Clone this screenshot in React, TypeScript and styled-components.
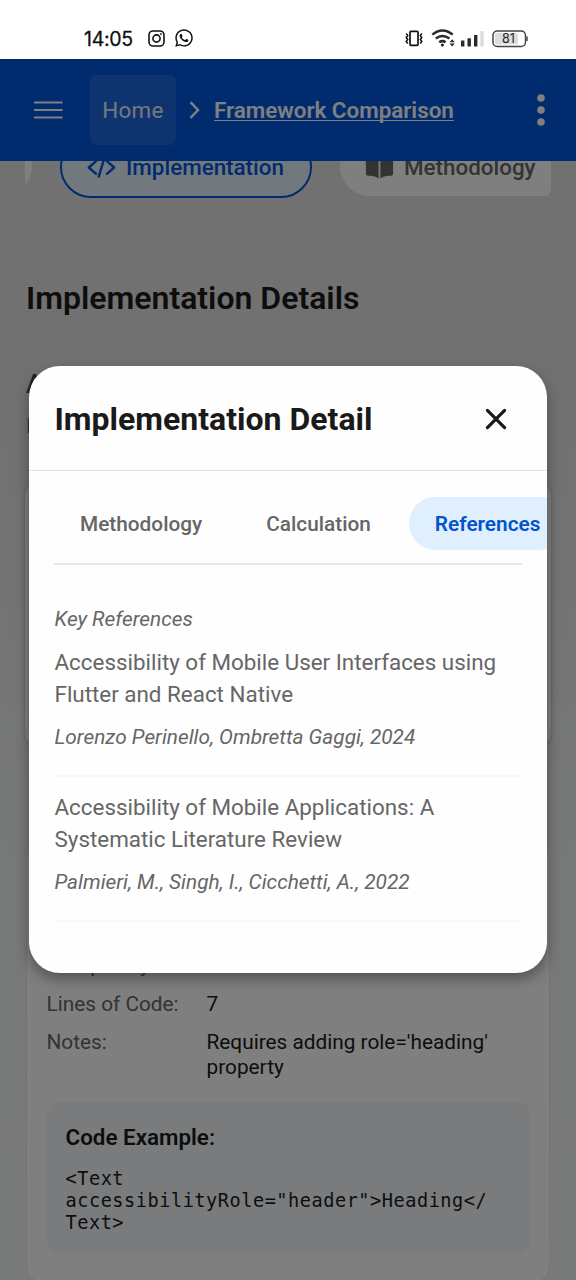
import React from 'react';
import styled, { createGlobalStyle } from 'styled-components';
import { IoBook, IoCodeSlashOutline } from 'react-icons/io5';
import { FaWhatsapp } from 'react-icons/fa';

const GlobalStyle = createGlobalStyle`
  * { box-sizing: border-box; }
  body { margin: 0; background: #fff; font-family: Roboto, "Liberation Sans", sans-serif; }
  h1, h2, h3, p, pre { margin: 0; }
  button { font: inherit; border: 0; background: none; padding: 0; }
`;

const Screen = styled.div`
  width: 576px;
  height: 1280px;
  overflow: hidden;
  display: flex;
  flex-direction: column;
`;

const StatusBar = styled.header`
  height: 59px;
  flex: none;
  padding: 17px 48px 0 84px;
  display: flex;
  justify-content: space-between;
  background: #fff;
  color: #111;
`;

const StatusGroup = styled.div`
  display: flex;
  align-items: center;
  height: 42px;
`;

const Clock = styled.span`
  width: 64px;
  padding-top: 2px;
  font: 400 19.5px/24px Inter, sans-serif;
  letter-spacing: -0.3px;
  -webkit-text-stroke: 0.3px #111;
  white-space: nowrap;
`;

const WhatsappIcon = styled(FaWhatsapp)`
  margin-left: 9px;
`;

const AppFrame = styled.div`
  position: relative;
  flex: 1;
  display: flex;
  flex-direction: column;
  min-height: 0;
  background: linear-gradient(#e2e2e2 0, #e2e2e2 300px, #e8e8e8 560px, #eef2f1 800px, #f1f4f2 100%);
`;

const AppBar = styled.nav`
  height: 102px;
  flex: none;
  display: flex;
  align-items: center;
  padding: 0 31px 0 34px;
  background: #0057dc;
  color: #fff;
`;

const HomeCrumb = styled.span`
  width: 86px;
  height: 70px;
  margin: 0 13px 0 27px;
  border-radius: 6px;
  background: rgba(255, 255, 255, 0.1);
  color: rgba(255, 255, 255, 0.93);
  display: flex;
  align-items: center;
  justify-content: center;
  font-size: 22.4px;
  letter-spacing: 0.3px;
`;

const CurrentCrumb = styled.span`
  flex: 1;
  margin-left: 14px;
  font-size: 22.4px;
  font-weight: 600;
  text-decoration: underline;
  text-decoration-thickness: 1px;
  text-decoration-skip-ink: none;
  text-underline-offset: 2px;
  white-space: nowrap;
`;

const Content = styled.main`
  flex: 1;
  min-height: 0;
  overflow: hidden;
  padding: 0 25px;
`;

const ChipStrip = styled.div`
  height: 62px;
  margin-top: -25px;
  display: flex;
  gap: 28px;
  overflow: hidden;
  border-radius: 10px;
`;

const Chip = styled.div<{ $active?: boolean; $width: number }>`
  flex: none;
  width: ${(p) => p.$width}px;
  height: ${(p) => (p.$active ? 62 : 60)}px;
  border-radius: 31px;
  border: ${(p) => (p.$active ? '2px solid #0057dc' : '0')};
  background: ${(p) => (p.$active ? '#e3f2fd' : '#fff')};
  color: ${(p) => (p.$active ? '#0057dc' : '#666')};
  display: flex;
  align-items: center;
  padding-left: 25px;
  padding-top: ${(p) => (p.$active ? 0 : 2)}px;
  gap: 10px;
  font-size: 22.4px;
  font-weight: 500;

  &:first-child {
    margin-left: -93px;
  }
`;

const CodeIcon = styled(IoCodeSlashOutline)`
  path { stroke-width: 42px; }
`;

const PageTitle = styled.h1`
  margin: 80px 0 0 1px;
  font-size: 32px;
  line-height: 40px;
  font-weight: 600;
  color: #1a1a1a;
`;

const Section = styled.h2`
  margin: 50px 0 0 1px;
  font-size: 25.6px;
  line-height: 32px;
  font-weight: 500;
  color: #444;
`;

const Intro = styled.p`
  margin: 13px 0 0 1px;
  font-size: 20.8px;
  line-height: 26px;
  color: #666;
`;

const Card = styled.section<{ $height: number; $gap: number }>`
  height: ${(p) => p.$height}px;
  margin-top: ${(p) => p.$gap}px;
  border-radius: 18px;
  background: #fff;
  box-shadow: 0 1px 4px rgba(0, 0, 0, 0.2);
`;

const DetailCard = styled(Card)`
  margin-left: 2px;
  margin-right: 2px;
  padding: 114px 19px 0 19.5px;
  display: flex;
  flex-direction: column;
  box-shadow: 0 0 3px rgba(0, 0, 0, 0.08);
`;

const Field = styled.div`
  display: flex;
  margin-bottom: 13px;
  font-size: 20.8px;
  line-height: 25px;

  &:first-child {
    margin-bottom: 14px;
  }
`;

const FieldName = styled.span`
  flex: 0 0 160px;
  color: #666;
`;

const FieldValue = styled.span`
  flex: 1;
  color: #1a1a1a;
`;

const CodeBox = styled.div`
  margin-top: 9px;
  height: 151px;
  padding: 21px 19px;
  border-radius: 12px;
  background: #f4f6f9;
  color: #1a1a1a;
`;

const CodeTitle = styled.h3`
  font-size: 22.4px;
  line-height: 28px;
  font-weight: 600;
`;

const Code = styled.pre`
  margin-top: 17px;
  font: 18.6px/22px "DejaVu Sans Mono", monospace;
  letter-spacing: 0.52px;
`;

const Backdrop = styled.div`
  position: absolute;
  inset: 0;
  display: flex;
  justify-content: center;
  align-items: flex-start;
  padding-top: 307px;
  background: rgba(0, 0, 0, 0.5);
`;

const Modal = styled.div`
  width: 518px;
  height: 607px;
  border-radius: 31px;
  overflow: hidden;
  background: #fefefe;
  box-shadow: 0 6px 14px rgba(0, 0, 0, 0.35);
`;

const ModalHeader = styled.div`
  height: 105px;
  padding: 1px 40px 0 25.5px;
  display: flex;
  align-items: center;
  justify-content: space-between;
  border-bottom: 1.5px solid #e4e4e4;
`;

const ModalTitle = styled.h2`
  font-size: 32px;
  font-weight: 700;
  color: #1a1a1a;
  white-space: nowrap;
`;

const TabRow = styled.div`
  margin: 26px 25px 0;
  height: 68px;
  display: flex;
  gap: 12px;
  border-bottom: 2px solid #e8e8e8;
`;

const Tab = styled.button<{ $active?: boolean }>`
  flex: none;
  height: 53px;
  padding: 1px 26px 0;
  border-radius: 27px;
  font-size: 20.8px;
  font-weight: ${(p) => (p.$active ? 600 : 500)};
  color: ${(p) => (p.$active ? '#0055cc' : '#666')};
  background: ${(p) => (p.$active ? '#e0effd' : 'transparent')};
`;

const ModalBody = styled.div`
  padding: 41px 25px 0 25.5px;
  color: #666;
`;

const Emphasis = styled.p`
  font-size: 20.8px;
  line-height: 26px;
  font-style: italic;
  white-space: nowrap;
`;

const Reference = styled.article`
  padding: 14px 0 25px;
  border-bottom: 2px solid #f8f8f8;
`;

const ReferenceTitle = styled.p`
  font-size: 22.4px;
  line-height: 32px;
  margin-bottom: 14px;
  white-space: nowrap;
`;

const InstagramIcon = () => (
  <svg width="17" height="17" viewBox="0 0 17 17" fill="none" stroke="#111" strokeWidth="1.6">
    <rect x="1" y="1" width="15" height="15" rx="4" />
    <circle cx="8.5" cy="8.5" r="3.6" />
    <circle cx="12.9" cy="4.1" r="0.3" />
  </svg>
);

const StatusIcons = () => (
  <svg width="124" height="24" viewBox="404 26 124 24" fill="none">
    <g stroke="#111" strokeWidth="1.5">
      <rect x="410" y="31.3" width="8" height="14" rx="1" strokeWidth="1.7" />
      <path d="M406.2 33.5l1.5 2-1.5 2 1.5 2-1.5 2 1.5 2M421.8 33.5l-1.5 2 1.5 2-1.5 2 1.5 2-1.5 2" />
    </g>
    <g stroke="#2a2a2a" strokeWidth="2.5">
      <path d="M432.3 34.6q10.2-8.2 20.4 0M435.8 38.6q6.7-5.2 13.6 0M439.2 42.3q3.2-2.4 6.4 0" />
    </g>
    <circle cx="442.4" cy="45" r="1.6" fill="#2a2a2a" />
    <path d="M449.6 42.2l2.6-3 2.6 3zM449.6 43.6l2.6 3 2.6-3z" fill="#2a2a2a" />
    <g fill="#2a2a2a">
      <rect x="461" y="40.5" width="3.4" height="6" />
      <rect x="467.5" y="38.3" width="3.4" height="8.2" />
      <rect x="474" y="35" width="3.4" height="11.5" />
      <rect x="480.3" y="31" width="3.4" height="15.5" fill="#ddd" />
    </g>
    <rect x="493" y="31" width="32.5" height="15.5" rx="4.3" stroke="#444" strokeWidth="1.5" />
    <rect x="495" y="33" width="23" height="11.5" rx="2" fill="#ddd" />
    <path d="M527 36.5v4.5" stroke="#444" strokeWidth="1.5" />
    <text x="508.5" y="43.4" textAnchor="middle" fontFamily="Inter, sans-serif" fontSize="12.5" fontWeight="400" fill="#222">81</text>
  </svg>
);

const MenuIcon = () => (
  <svg width="29" height="20" viewBox="0 0 29 20" stroke="#fff" strokeWidth="2.2">
    <path d="M0 2.5h28.5M0 10h28.5M0 17.5h28.5" />
  </svg>
);

const ChevronIcon = () => (
  <svg width="11" height="18" viewBox="0 0 11 18" fill="none" stroke="#fff" strokeWidth="2.5">
    <path d="M1.5 1.2L9 9l-7.5 7.8" />
  </svg>
);

const MoreIcon = () => (
  <svg width="8" height="32" viewBox="0 0 8 32" fill="#fff">
    <circle cx="4" cy="4" r="3.8" />
    <circle cx="4" cy="16" r="3.8" />
    <circle cx="4" cy="28" r="3.8" />
  </svg>
);

const CloseIcon = () => (
  <svg width="22" height="22" viewBox="0 0 22 22" stroke="#1a1a1a" strokeWidth="3.2" strokeLinecap="round">
    <path d="M2.4 2.4l17.2 17.2M19.6 2.4L2.4 19.6" />
  </svg>
);

const references = [
  {
    title: ['Accessibility of Mobile User Interfaces using', 'Flutter and React Native'],
    authors: 'Lorenzo Perinello, Ombretta Gaggi, 2024',
  },
  {
    title: ['Accessibility of Mobile Applications: A', 'Systematic Literature Review'],
    authors: 'Palmieri, M., Singh, I., Cicchetti, A., 2022',
  },
];

export default function App() {
  return (
    <Screen>
      <GlobalStyle />
      <StatusBar>
        <StatusGroup>
          <Clock>14:05</Clock>
          <InstagramIcon />
          <WhatsappIcon size={20} />
        </StatusGroup>
        <StatusGroup>
          <StatusIcons />
        </StatusGroup>
      </StatusBar>
      <AppFrame>
        <AppBar>
          <MenuIcon />
          <HomeCrumb>Home</HomeCrumb>
          <ChevronIcon />
          <CurrentCrumb>Framework Comparison</CurrentCrumb>
          <MoreIcon />
        </AppBar>
        <Content>
          <ChipStrip>
            <Chip $width={100} />
            <Chip $active $width={252}>
              <CodeIcon size={29} />
              Implementation
            </Chip>
            <Chip $width={240}>
              <IoBook size={29} />
              Methodology
            </Chip>
          </ChipStrip>
          <PageTitle>Implementation Details</PageTitle>
          <Section>A</Section>
          <Intro>I</Intro>
          <Card $height={271} $gap={40} />
          <DetailCard $height={444} $gap={89}>
            <Field>
              <FieldName>Complexity:</FieldName>
            </Field>
            <Field>
              <FieldName>Lines of Code:</FieldName>
              <FieldValue>7</FieldValue>
            </Field>
            <Field>
              <FieldName>Notes:</FieldName>
              <FieldValue>Requires adding role='heading' property</FieldValue>
            </Field>
            <CodeBox>
              <CodeTitle>Code Example:</CodeTitle>
              <Code>{'<Text\naccessibilityRole="header">Heading</\nText>'}</Code>
            </CodeBox>
          </DetailCard>
        </Content>
        <Backdrop>
          <Modal role="dialog">
            <ModalHeader>
              <ModalTitle>Implementation Detail</ModalTitle>
              <CloseIcon />
            </ModalHeader>
            <TabRow>
              <Tab>Methodology</Tab>
              <Tab>Calculation</Tab>
              <Tab $active>References</Tab>
            </TabRow>
            <ModalBody>
              <Emphasis>Key References</Emphasis>
              {references.map((r) => (
                <Reference key={r.authors}>
                  <ReferenceTitle>
                    {r.title[0]}
                    <br />
                    {r.title[1]}
                  </ReferenceTitle>
                  <Emphasis>{r.authors}</Emphasis>
                </Reference>
              ))}
            </ModalBody>
          </Modal>
        </Backdrop>
      </AppFrame>
    </Screen>
  );
}
